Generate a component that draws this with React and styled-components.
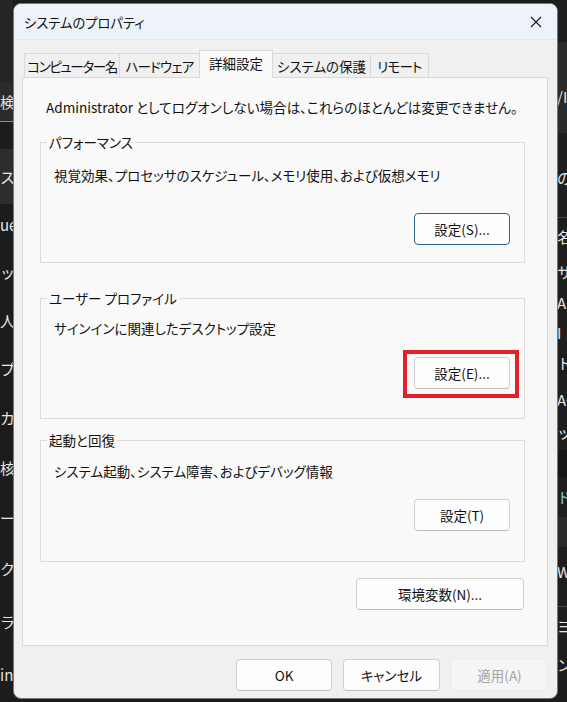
import React from "react";
import styled, { createGlobalStyle } from "styled-components";

const GlobalStyle = createGlobalStyle`
  body {
    margin: 0;
    background: #1c1c1c;
    font-family: "Noto Sans CJK JP", "Noto Sans", sans-serif;
  }
`;

const leftRows = [
  { h: 82, bg: "#252525", text: "" },
  { h: 40, bg: "#2b2b2b", text: "検索", line: "#8c8c8c" },
  { h: 27, bg: "#1c1c1c", text: "" },
  { h: 55, bg: "#2d2d2d", text: "スト" },
  { h: 42, bg: "#1c1c1c", text: "ue" },
  { h: 52, bg: "#1c1c1c", text: "ッ" },
  { h: 46, bg: "#1c1c1c", text: "人" },
  { h: 49, bg: "#1c1c1c", text: "プ" },
  { h: 50, bg: "#1c1c1c", text: "カ" },
  { h: 50, bg: "#1c1c1c", text: "核" },
  { h: 50, bg: "#1c1c1c", text: "ー" },
  { h: 52, bg: "#1c1c1c", text: "ク" },
  { h: 53, bg: "#1c1c1c", text: "ラ" },
  { h: 54, bg: "#1c1c1c", text: "in" },
];

const rightRows = [
  { h: 42, bg: "#1e1e1e", text: "" },
  { h: 91, bg: "#2b2b2b", text: "/I", pad: 46 },
  { h: 85, bg: "#1e1e1e", text: "の", pad: 36, line: "#4a4a4a" },
  { h: 38, bg: "#1e1e1e", text: "名", pad: 10 },
  { h: 32, bg: "#1e1e1e", text: "サ" },
  { h: 30, bg: "#1e1e1e", text: "A" },
  { h: 30, bg: "#1e1e1e", text: "I" },
  { h: 38, bg: "#1e1e1e", text: "ト", pad: 6 },
  { h: 28, bg: "#1e1e1e", text: "AC" },
  { h: 36, bg: "#1e1e1e", text: "ッ" },
  { h: 27, bg: "#151515", text: "" },
  { h: 40, bg: "#1e1e1e", text: "ド", color: "#8fc4cf" },
  { h: 30, bg: "#2a2a2a", text: "" },
  { h: 60, bg: "#1e1e1e", text: "W", pad: 16, line: "#4a4a4a" },
  { h: 40, bg: "#1e1e1e", text: "ヨ", pad: 10 },
  { h: 35, bg: "#1e1e1e", text: "ン" },
];

const groups = [
  {
    title: "パフォーマンス",
    desc: "視覚効果、プロセッサのスケジュール、メモリ使用、および仮想メモリ",
    button: "設定(S)...",
    top: 14,
    gap: 28,
    bottom: 17,
    focused: true,
    space: 0,
  },
  {
    title: "ユーザー プロファイル",
    desc: "サインインに関連したデスクトップ設定",
    button: "設定(E)...",
    top: 11,
    gap: 19,
    bottom: 29,
    marked: true,
    space: 26,
  },
  {
    title: "起動と回復",
    desc: "システム起動、システム障害、およびデバッグ情報",
    button: "設定(T)",
    top: 12,
    gap: 18,
    bottom: 30,
    space: 12,
  },
];

const tabs = [
  { label: "コンピューター名", w: 96, ls: -1.4 },
  { label: "ハードウェア", w: 81, ls: -0.8 },
  { label: "詳細設定", w: 74, ls: 0, active: true },
  { label: "システムの保護", w: 99, ls: 0 },
  { label: "リモート", w: 59, ls: -0.8 },
];

const App = () => {
  return (
    <>
      <GlobalStyle />
      <Desktop>
        <Strip $w={13}>
          {leftRows.map((r, i) => (
            <BackRow key={i} $h={r.h} $bg={r.bg} $line={r.line}>
              {r.text}
            </BackRow>
          ))}
        </Strip>
        <Dialog>
          <TitleBar>
            <TitleText>システムのプロパティ</TitleText>
            <CloseBtn>
              <svg width="12" height="12" viewBox="0 0 12 12">
                <path d="M1 1L11 11M11 1L1 11" stroke="#1a1a1a" strokeWidth="1.1" />
              </svg>
            </CloseBtn>
          </TitleBar>
          <Body>
            <TabRow>
              {tabs.map((t) => (
                <Tab key={t.label} $w={t.w} $ls={t.ls} $active={t.active}>
                  {t.label}
                </Tab>
              ))}
            </TabRow>
            <Panel>
              <Intro>Administrator としてログオンしない場合は、これらのほとんどは変更できません。</Intro>
              {groups.map((g) => (
                <Group key={g.title} $top={g.top} $bottom={g.bottom} $space={g.space}>
                  <Legend>{g.title}</Legend>
                  <Desc>{g.desc}</Desc>
                  <ButtonLine $gap={g.gap}>
                    <Marker $on={g.marked}>
                      <Button $focused={g.focused}>{g.button}</Button>
                    </Marker>
                  </ButtonLine>
                </Group>
              ))}
              <EnvLine>
                <Button $w={168}>環境変数(N)...</Button>
              </EnvLine>
            </Panel>
            <Footer>
              <Button $w={96}>OK</Button>
              <Button $w={97}>キャンセル</Button>
              <Button $w={97} $disabled>
                適用(A)
              </Button>
            </Footer>
          </Body>
        </Dialog>
        <Strip $w={9}>
          {rightRows.map((r, i) => (
            <BackRow
              key={i}
              $h={r.h}
              $bg={r.bg}
              $line={r.line}
              $pad={r.pad}
              $color={r.color}
              $left={-1}
            >
              {r.text}
            </BackRow>
          ))}
        </Strip>
      </Desktop>
    </>
  );
};

export default App;

const Desktop = styled.div`
  width: 567px;
  height: 702px;
  display: flex;
  align-items: flex-start;
  background: #1c1c1c;
  overflow: hidden;
`;

const Strip = styled.div`
  width: ${(p) => p.$w}px;
  flex-shrink: 0;
  height: 702px;
  overflow: hidden;
  display: flex;
  flex-direction: column;
`;

const BackRow = styled.div`
  height: ${(p) => p.$h}px;
  flex-shrink: 0;
  box-sizing: border-box;
  background: ${(p) => p.$bg};
  border-bottom: ${(p) => (p.$line ? `1px solid ${p.$line}` : "none")};
  color: ${(p) => p.$color || "#e6e6e6"};
  font-size: 15px;
  white-space: nowrap;
  display: flex;
  align-items: ${(p) => (p.$pad ? "flex-start" : "center")};
  padding-top: ${(p) => p.$pad || 0}px;
  margin-left: ${(p) => p.$left || 0}px;
  line-height: 18px;
`;

const Dialog = styled.div`
  width: 545px;
  height: 696px;
  margin-top: 3px;
  flex-shrink: 0;
  box-sizing: border-box;
  background: #f0f0f0;
  border: 1px solid #767676;
  border-radius: 8px;
  overflow: hidden;
  display: flex;
  flex-direction: column;
  font-feature-settings: "palt";
  color: #111;
`;

const TitleBar = styled.div`
  height: 35px;
  flex-shrink: 0;
  background: #eef3f9;
  border-bottom: 1px solid #e2e5ea;
  display: flex;
  align-items: center;
  justify-content: space-between;
  padding: 0 9px 0 10px;
`;

const TitleText = styled.div`
  font-size: 13.3px;
  padding-top: 1px;
`;

const CloseBtn = styled.div`
  width: 24px;
  height: 24px;
  display: flex;
  align-items: center;
  justify-content: center;
`;

const Body = styled.div`
  flex: 1;
  display: flex;
  flex-direction: column;
  padding: 10px 9px 0 8px;
`;

const TabRow = styled.div`
  height: 27px;
  display: flex;
  align-items: flex-end;
  padding-left: 3px;
  position: relative;
  z-index: 1;
`;

const Tab = styled.div`
  width: ${(p) => p.$w}px;
  height: ${(p) => (p.$active ? 28 : 24)}px;
  box-sizing: border-box;
  margin: 0 0 ${(p) => (p.$active ? -1 : 0)}px -1px;
  background: ${(p) => (p.$active ? "#f9f9f9" : "#f0f0f0")};
  border: 1px solid #d9d9d9;
  border-bottom: none;
  font-size: 13.5px;
  letter-spacing: ${(p) => p.$ls}px;
  display: flex;
  align-items: center;
  justify-content: center;
  padding-bottom: ${(p) => (p.$active ? 3 : 0)}px;
  z-index: ${(p) => (p.$active ? 2 : 1)};
  white-space: nowrap;
`;

const Panel = styled.div`
  height: 569px;
  box-sizing: border-box;
  background: #f9f9f9;
  border: 1px solid #d9d9d9;
  padding: 19px 22px 0 17px;
  display: flex;
  flex-direction: column;
`;

const Intro = styled.div`
  font-size: 13.6px;
  line-height: 20px;
  padding-left: 6px;
  white-space: nowrap;
  margin-bottom: 16px;
`;

const Group = styled.fieldset`
  margin: ${(p) => p.$space}px 0 0 0;
  min-width: 0;
  border: 1px solid #dcdcdc;
  padding: ${(p) => p.$top}px 14px ${(p) => p.$bottom}px 13px;
  display: flex;
  flex-direction: column;
`;

const Legend = styled.legend`
  font-size: 13.5px;
  line-height: 18px;
  padding: 0 2px;
  margin-left: -7px;
`;

const Desc = styled.div`
  font-size: 13.5px;
  line-height: 20px;
  white-space: nowrap;
`;

const ButtonLine = styled.div`
  margin-top: ${(p) => p.$gap}px;
  display: flex;
  justify-content: flex-end;
`;

const Marker = styled.div`
  position: relative;
  display: flex;

  &::after {
    content: "";
    display: ${(p) => (p.$on ? "block" : "none")};
    position: absolute;
    left: -11px;
    top: -7px;
    right: -9px;
    bottom: -9px;
    border: 4px solid #e3202a;
    pointer-events: none;
  }
`;

const Button = styled.div`
  width: ${(p) => p.$w || 96}px;
  height: 32px;
  box-sizing: border-box;
  border-radius: 4px;
  background: ${(p) => (p.$disabled ? "#f5f5f5" : "#fdfdfd")};
  border: 1px solid
    ${(p) => (p.$focused ? "#2a6585" : p.$disabled ? "#ececec" : "#d0d0d0")};
  border-bottom-color: ${(p) =>
    p.$focused ? "#2a6585" : p.$disabled ? "#ececec" : "#bdbdbd"};
  color: ${(p) => (p.$disabled ? "#a3a3a3" : "#111")};
  font-size: 13.5px;
  display: flex;
  align-items: center;
  justify-content: center;
  white-space: nowrap;
`;

const EnvLine = styled.div`
  margin-top: 16px;
  display: flex;
  justify-content: flex-end;
  padding-right: 1px;
`;

const Footer = styled.div`
  margin-top: 13px;
  display: flex;
  justify-content: flex-end;
  gap: 11px;
`;
